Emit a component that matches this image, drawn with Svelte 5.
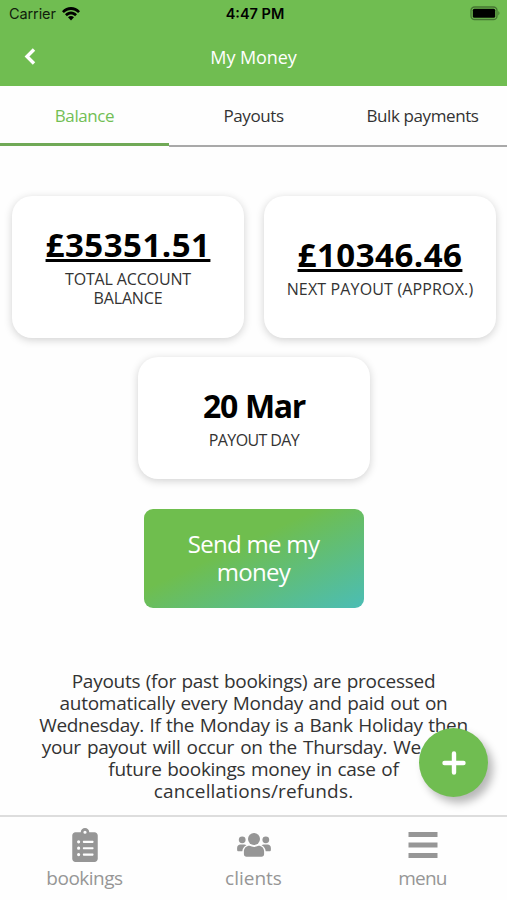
<script>
  const tabs = ['Balance', 'Payouts', 'Bulk payments'];
  let activeTab = 'Balance';

  const notice = [
    'Payouts (for past bookings) are processed',
    'automatically every Monday and paid out on',
    'Wednesday. If the Monday is a Bank Holiday then',
    'your payout will occur on the Thursday. We hold',
    'future bookings money in case of',
    'cancellations/refunds.'
  ];
</script>

<div class="app">
  <header>
    <div class="status">
      <div class="carrier">
        <span>Carrier</span>
        <svg width="18" height="14" viewBox="0 0 18 14">
          <path d="M0 4.2C5-1.4 13-1.4 18 4.2L16.1 6.1C12.1 1.8 5.9 1.8 1.9 6.1Z" />
          <path d="M3 7.3C6.5 3.7 11.5 3.7 15 7.3L13.1 9.2C10.7 6.8 7.3 6.8 4.9 9.2Z" />
          <path d="M6 10.3C7.8 8.7 10.2 8.7 12 10.3L9 13.4Z" />
        </svg>
      </div>
      <span class="time">4:47 PM</span>
      <svg class="battery" width="31" height="15" viewBox="0 0 31 15">
        <rect x="1" y="1" width="26" height="12.5" rx="3.6" fill="none" stroke="#000" stroke-opacity=".38" stroke-width="1.3" />
        <rect x="2.8" y="2.8" width="22.4" height="9" rx="1.5" />
        <path d="M28.4 5Q30.5 7.2 28.4 9.4Z" opacity=".4" />
      </svg>
    </div>
    <div class="title-bar">
      <button class="back" aria-label="Back">
        <svg width="12" height="18" viewBox="0 0 12 18">
          <path d="M10 1.500L3 8.500L10 15.500" fill="none" stroke="#fff" stroke-width="3.400" />
        </svg>
      </button>
      <h1>My Money</h1>
    </div>
  </header>

  <nav class="tabs">
    {#each tabs as tab}
      <button class="tab" class:active={tab === activeTab} on:click={() => (activeTab = tab)}>
        <span>{tab}</span>
      </button>
    {/each}
  </nav>

  <main>
    <div class="cards">
      <section class="card">
        <strong class="amount">£35351.51</strong>
        <span class="label">TOTAL ACCOUNT<br />BALANCE</span>
      </section>
      <section class="card">
        <strong class="amount">£10346.46</strong>
        <span class="label next">NEXT PAYOUT (APPROX.)</span>
      </section>
    </div>
    <section class="card day">
      <strong class="date">20 Mar</strong>
      <span class="label payday">PAYOUT DAY</span>
    </section>
    <button class="send">Send me my<br />money</button>
    <p>
      {#each notice as line}
        <span>{line}</span>
      {/each}
    </p>
  </main>

  <footer>
    <button class="item">
      <svg width="26" height="34" viewBox="0 0 384 512">
        <path d="M336 64h-80c0-35.300-28.700-64-64-64s-64 28.700-64 64H48C21.500 64 0 85.500 0 112v352c0 26.500 21.500 48 48 48h288c26.500 0 48-21.500 48-48V112c0-26.500-21.500-48-48-48zM96 424a24 24 0 1 1 0-48 24 24 0 0 1 0 48zm0-96a24 24 0 1 1 0-48 24 24 0 0 1 0 48zm0-96a24 24 0 1 1 0-48 24 24 0 0 1 0 48zm96-192a24 24 0 1 1 0 48 24 24 0 0 1 0-48zm128 368c0 4.400-3.600 8-8 8H168c-4.400 0-8-3.600-8-8v-16c0-4.400 3.600-8 8-8h144c4.400 0 8 3.600 8 8v16zm0-96c0 4.400-3.600 8-8 8H168c-4.400 0-8-3.600-8-8v-16c0-4.400 3.600-8 8-8h144c4.400 0 8 3.600 8 8v16zm0-96c0 4.400-3.600 8-8 8H168c-4.400 0-8-3.600-8-8v-16c0-4.400 3.600-8 8-8h144c4.400 0 8 3.600 8 8v16z" />
      </svg>
      <span class="bookings">bookings</span>
    </button>
    <button class="item">
      <svg width="34" height="34" viewBox="0 0 34 34">
        <circle cx="17" cy="11" r="6" />
        <circle cx="5.200" cy="11.800" r="3.400" />
        <circle cx="28.800" cy="11.800" r="3.400" />
        <path d="M12.500 17.800c3 1.500 6 1.500 9 0 3.200 0 5.600 2.400 5.600 5.600v2.700c0 1.700-1 2.700-2.700 2.700H9.600c-1.700 0-2.700-1-2.700-2.700v-2.700c0-3.200 2.400-5.600 5.600-5.600z" />
        <path d="M3.500 16.500h3.700c.9 0 1.600.3 2.200.8-2.400 1.200-3.800 3.200-4.100 6H1.600C.7 23.300.1 22.800.1 21.800v-1.900c0-2 1.400-3.400 3.400-3.400zM30.500 16.500h-3.700c-.9 0-1.600.3-2.200.8 2.400 1.200 3.800 3.200 4.100 6h3.700c.9 0 1.500-.5 1.500-1.500v-1.900c0-2-1.400-3.400-3.400-3.400z" />
      </svg>
      <span class="clients">clients</span>
    </button>
    <button class="item">
      <svg width="30" height="34" viewBox="0 0 30 34">
        <path d="M.5 4h29v5H.5zM.5 14.500h29v5H.5zM.5 25h29v5H.5z" />
      </svg>
      <span class="menu">menu</span>
    </button>
  </footer>

  <button class="add" aria-label="Add">
    <svg width="24" height="24" viewBox="0 0 24 24">
      <path d="M12 2.500V21.500M2.500 12H21.500" stroke="#fff" stroke-width="4.400" stroke-linecap="round" />
    </svg>
  </button>
</div>

<style>
  :global(body) {
    background: #fefefe;
  }

  .app {
    position: relative;
    display: flex;
    flex-direction: column;
    width: 507px;
    height: 900px;
    overflow: hidden;
    box-sizing: border-box;
    font-family: "Open Sans", sans-serif;
    color: #333;
    background: #fefefe;
  }

  button {
    border: 0;
    padding: 0;
    margin: 0;
    background: none;
    color: inherit;
    font: inherit;
  }

  svg {
    display: block;
  }

  header {
    height: 86px;
    background: #70bd51;
  }

  .status {
    display: grid;
    grid-template-columns: 1fr auto 1fr;
    align-items: center;
    height: 27px;
    padding: 0 6px 0 9px;
    font: 14.5px Inter, sans-serif;
    color: #10200b;
  }

  .carrier {
    display: flex;
    align-items: center;
    gap: 6px;
    letter-spacing: -0.1px;
  }

  .time {
    font-weight: 600;
    color: #000;
  }

  .battery {
    justify-self: end;
  }

  .title-bar {
    display: grid;
    grid-template-columns: 60px 1fr 60px;
    align-items: center;
    height: 59px;
  }

  .back {
    justify-self: center;
  }

  h1 {
    margin: 0;
    text-align: center;
    font-size: 18px;
    font-weight: 400;
    letter-spacing: -0.1px;
    color: #fff;
  }

  .tabs {
    display: grid;
    grid-template-columns: repeat(3, 1fr);
    height: 61px;
  }

  .tab {
    font-size: 17px;
    letter-spacing: -0.4px;
    border-bottom: 2px solid #a9a9a9;
  }

  .tab.active {
    height: 60px;
    padding-top: 2px;
    color: #72be55;
    border-bottom: 3px solid #70a956;
  }

  main {
    display: flex;
    flex-direction: column;
    align-items: center;
    height: 668px;
    padding-top: 49px;
    box-sizing: border-box;
  }

  .cards {
    display: flex;
    gap: 19.5px;
    margin: 0 0 19.5px 1px;
  }

  .card {
    display: flex;
    flex-direction: column;
    align-items: center;
    justify-content: center;
    width: 232.5px;
    height: 141.5px;
    border-radius: 20px;
    background: #fff;
    box-shadow: 0 2px 8px rgba(0, 0, 0, 0.18);
  }

  .day {
    height: 122px;
    margin-left: 1px;
  }

  .amount, .date {
    font-size: 33px;
    line-height: 38px;
    font-weight: 700;
    color: #000;
  }

  .amount {
    padding-top: 1px;
    letter-spacing: 0.5px;
    text-decoration: underline;
    text-decoration-thickness: 2.5px;
    text-underline-offset: 2px;
    text-decoration-skip-ink: none;
  }

  .date {
    padding-top: 1px;
    font-size: 32px;
    letter-spacing: -1.3px;
    word-spacing: 1px;
  }

  .label {
    margin-top: 6px;
    font-size: 16px;
    line-height: 19.5px;
    letter-spacing: -0.15px;
    text-align: center;
    white-space: nowrap;
  }

  .next {
    letter-spacing: 0.15px;
  }

  .payday {
    letter-spacing: -0.6px;
  }

  .send {
    width: 220px;
    height: 99px;
    margin-top: 30px;
    padding-bottom: 1px;
    border-radius: 9px;
    background: linear-gradient(155deg, #6fbe4e 40%, #4bbdb5 100%);
    color: #fff;
    font-size: 24px;
    line-height: 28.5px;
    letter-spacing: -0.7px;
  }

  p {
    display: flex;
    flex-direction: column;
    align-items: center;
    margin: 62px 0 0;
    font-size: 19px;
    line-height: 22px;
    letter-spacing: -0.27px;
    word-spacing: 0.9px;
    white-space: nowrap;
  }

  p span:nth-child(3) {
    letter-spacing: -0.32px;
  }

  p span:nth-child(4) {
    letter-spacing: -0.36px;
    word-spacing: 1.7px;
  }

  p span:last-child {
    letter-spacing: 0.18px;
  }

  footer {
    display: grid;
    grid-template-columns: repeat(3, 1fr);
    height: 85px;
    box-sizing: border-box;
    border-top: 2px solid #ddd;
    color: #969696;
  }

  .item {
    display: flex;
    flex-direction: column;
    align-items: center;
    padding-top: 11px;
    font-size: 19px;
    line-height: 32px;
  }

  .item svg {
    fill: #969696;
  }

  .bookings {
    letter-spacing: -0.5px;
  }

  .menu {
    letter-spacing: -0.8px;
  }

  .add {
    position: absolute;
    left: 419px;
    top: 728px;
    display: flex;
    align-items: center;
    justify-content: center;
    width: 69px;
    height: 69px;
    border-radius: 50%;
    background: #70bd51;
    box-shadow: 5px 6px 9px rgba(0, 0, 0, 0.28);
  }
</style>
